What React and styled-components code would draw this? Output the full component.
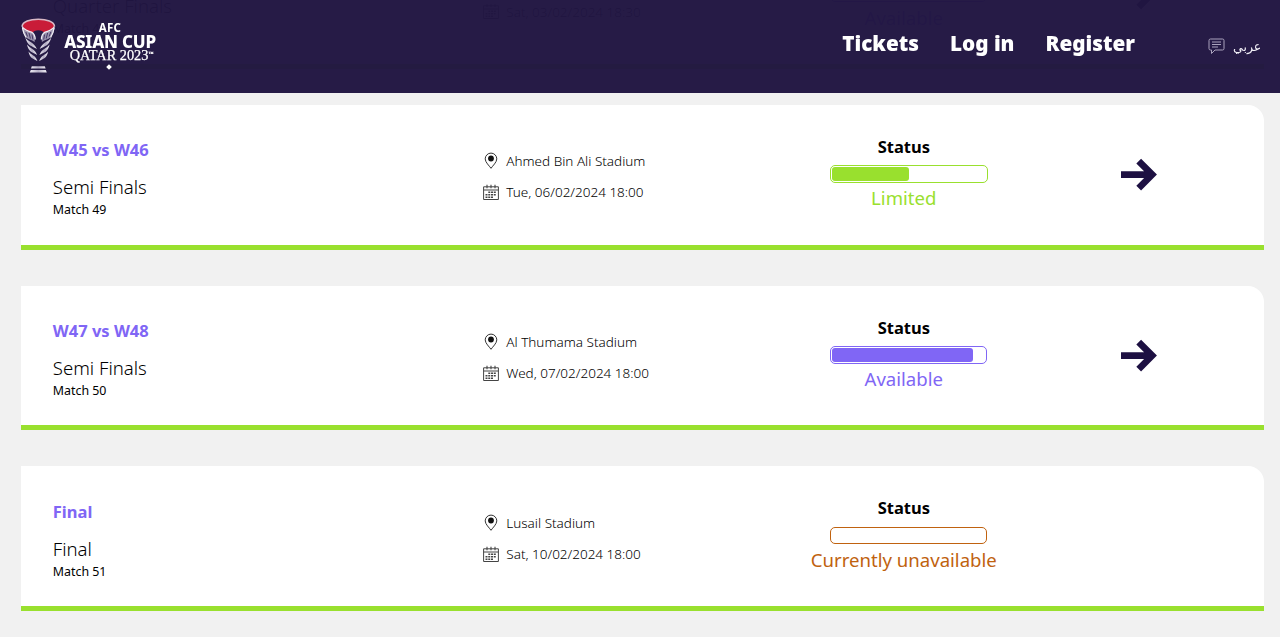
import React from "react";
import styled, { createGlobalStyle } from "styled-components";

const matches = [
  {
    id: 47,
    teams: "W39 vs W42",
    stage: "Quarter Finals",
    stadium: "Al Bayt Stadium",
    date: "Sat, 03/02/2024 18:30",
    status: "available",
  },
  {
    id: 49,
    teams: "W45 vs W46",
    stage: "Semi Finals",
    stadium: "Ahmed Bin Ali Stadium",
    date: "Tue, 06/02/2024 18:00",
    status: "limited",
  },
  {
    id: 50,
    teams: "W47 vs W48",
    stage: "Semi Finals",
    stadium: "Al Thumama Stadium",
    date: "Wed, 07/02/2024 18:00",
    status: "available",
  },
  {
    id: 51,
    teams: "Final",
    stage: "Final",
    stadium: "Lusail Stadium",
    date: "Sat, 10/02/2024 18:00",
    status: "unavailable",
  },
];

const statuses = {
  limited: { label: "Limited", color: "#99e02e", fill: 50 },
  available: { label: "Available", color: "#8066f5", fill: 92 },
  unavailable: { label: "Currently unavailable", color: "#c0620f", fill: 0 },
};

const Trophy = () => (
  <svg width="35" height="56" viewBox="0 0 35 56" fill="none">
    <defs>
      <linearGradient id="silver" x1="0" x2="1" y1="0" y2="0">
        <stop offset="0" stopColor="#f0eef5" />
        <stop offset="0.5" stopColor="#b4adc4" />
        <stop offset="1" stopColor="#f0eef5" />
      </linearGradient>
    </defs>
    <path
      d="M1.200 7.500C2 3.600 9 1 17.300 1s15.400 2.600 16.100 6.500c-1 4-5 6.500-9.500 8-1.500-2.300-4-3.300-6.600-3.300s-5.100 1-6.600 3.300C6 14 2.200 11.500 1.200 7.500Z"
      fill="#c91c38"
    />
    <path
      d="M1 8.500C1.500 3.600 9 1.200 17.300 1.200s15.800 2.400 16.300 7.300"
      stroke="#d8b9c6"
      strokeWidth="1.500"
    />
    <g fill="#9b93ae">
      <path d="M1 8.500c1.500 4 6 4.500 9.500 6 3 1.500 3.500 4.500 3.200 9.500-3-2.500-7-2.500-9.500-5.500C2.300 15.500 1.200 12.500 1 8.500Z" />
      <path d="M33.600 8.500c-1.500 4-6 4.500-9.500 6-3 1.500-3.500 4.500-3.200 9.500 3-2.500 7-2.500 9.500-5.500 1.900-3 3-6 3.200-10Z" />
    </g>
    <g stroke="#f0eef5" strokeWidth="1.300">
      <path d="M1.200 8.500c1.500 3.500 5.800 4.200 9.300 5.700 2.700 1.400 3.600 4 3.700 7.300" />
      <path d="M33.400 8.500c-1.500 3.500-5.800 4.200-9.300 5.700-2.700 1.400-3.600 4-3.700 7.300" />
      <path d="M1.500 10c.7 4 1.700 6.500 3.500 9.500" />
      <path d="M33.100 10c-.7 4-1.700 6.500-3.500 9.500" />
    </g>
    <path
      d="M4.800 14l1.700 4.500M8 15l1.400 5.500M11 16.500l.9 5M29.800 14l-1.700 4.500M26.600 15l-1.400 5.500M23.600 16.500l-.9 5"
      stroke="#3a2c5c"
      strokeWidth=".9"
    />
    <g fill="url(#silver)">
      <path d="M4.300 19.500c3 4.500 8.700 4.500 11.600 11.500-4.700-2.800-9.400-3-11.600-11.500Z" />
      <path d="M30.300 19.500c-3 4.500-8.700 4.500-11.600 11.500 4.700-2.800 9.400-3 11.600-11.500Z" />
      <path d="M6 26.500c3 4 8 4.200 10.100 10.500-4.400-2.600-8.500-2.800-10.100-10.500Z" />
      <path d="M28.600 26.500c-3 4-8 4.200-10.100 10.500 4.400-2.600 8.500-2.800 10.100-10.500Z" />
      <path d="M7.500 33.500c2.800 3.500 6.900 3.700 8.900 9.500-4-2.200-7.700-2.600-8.900-9.500Z" />
      <path d="M27.100 33.500c-2.800 3.500-6.900 3.700-8.900 9.500 4-2.200 7.700-2.600 8.900-9.500Z" />
      <path d="M10.800 48.300h13l.8 2.200H10ZM9.800 52h15l1 2.500H8.800Z" />
    </g>
  </svg>
);

const PinIcon = () => (
  <svg width="16" height="18" viewBox="0 0 16 18" fill="none">
    <path
      d="M8 16.300C6.300 13.800 2.200 10.200 2.200 6.900a5.800 5.800 0 0 1 11.600 0c0 3.300-4.100 6.900-5.800 9.400Z"
      stroke="#333"
      strokeWidth="1"
    />
    <circle cx="8" cy="6.500" r="2.900" fill="#111" />
  </svg>
);

const CalendarIcon = () => (
  <svg width="16" height="17" viewBox="0 0 16 17" fill="none" stroke="#444">
    <path d="M.6 2.800h14.800v12.700H.6ZM.6 6h14.800" strokeWidth="1" />
    <path d="M4 .8v3.400M8 .8v3.400M12 .8v3.400" strokeWidth="1.100" />
    <path
      d="M5.300 8.200h8.200M2.500 10.800h11M2.500 13.300h8"
      strokeWidth="1.600"
      strokeDasharray="2 .75"
    />
  </svg>
);

const ArrowIcon = () => (
  <svg width="37" height="34" viewBox="0 0 37 34" fill="none">
    <path
      d="M0 16.600H31M17.700 3.100L31.200 16.600L17.700 30.100"
      stroke="#1d1042"
      strokeWidth="6.700"
    />
  </svg>
);

const ChatIcon = () => (
  <svg width="17" height="17" viewBox="0 0 17 17" fill="none" stroke="#aaa3bd">
    <path d="M2.500 1h12A1.500 1.500 0 0 1 16 2.500v8a1.500 1.500 0 0 1-1.500 1.500H7l-3.500 3.500V12h-1A1.500 1.500 0 0 1 1 10.500v-8A1.500 1.500 0 0 1 2.500 1Z" />
    <path d="M4 4h9M4 6.500h9M4 9h6" />
  </svg>
);

const StatusMeter = ({ status }) => {
  const { label, color, fill } = statuses[status];
  return (
    <Status>
      <StatusTitle>Status</StatusTitle>
      <Bar $color={color} $wide={status === "limited"}>
        {fill > 0 && <BarFill $color={color} style={{ width: `${fill}%` }} />}
      </Bar>
      <StatusLabel $color={color}>{label}</StatusLabel>
    </Status>
  );
};

const MatchCard = ({ match }) => (
  <Card>
    <Info>
      <Teams>{match.teams}</Teams>
      <Stage>{match.stage}</Stage>
      <MatchNumber>Match {match.id}</MatchNumber>
    </Info>
    <Venue>
      <VenueRow>
        <PinIcon />
        {match.stadium}
      </VenueRow>
      <VenueRow>
        <CalendarIcon />
        {match.date}
      </VenueRow>
    </Venue>
    <StatusMeter status={match.status} />
    <Action>{match.status !== "unavailable" && <ArrowIcon />}</Action>
  </Card>
);

const App = () => {
  return (
    <Page>
      <GlobalStyle />
      <Header>
        <Logo>
          <Trophy />
          <LogoText>
            <LogoTop>AFC</LogoTop>
            <LogoName>ASIAN CUP</LogoName>
            <LogoHost>
              QATAR 2023<Trademark>™</Trademark>
            </LogoHost>
            <LogoDot />
          </LogoText>
        </Logo>
        <Nav>
          <NavLink>Tickets</NavLink>
          <NavLink>Log in</NavLink>
          <NavLink>Register</NavLink>
        </Nav>
        <Language>
          <ChatIcon />
          <span lang="ar">عربي</span>
        </Language>
      </Header>
      <MatchList>
        {matches.map((match) => (
          <MatchCard key={match.id} match={match} />
        ))}
      </MatchList>
    </Page>
  );
};

export default App;

const GlobalStyle = createGlobalStyle`
  * {
    box-sizing: border-box;
  }
  body {
    margin: 0;
    overflow: hidden;
    background: #f1f1f1;
    font-family: "Noto Sans", "Open Sans", sans-serif;
    color: #000;
  }
  svg {
    display: block;
    flex-shrink: 0;
  }
`;

const Page = styled.div`
  height: 637px;
  overflow: hidden;
`;

const Header = styled.header`
  position: fixed;
  top: 0;
  left: 0;
  z-index: 2;
  display: flex;
  width: 100%;
  height: 93.4px;
  padding: 0 20px 0 21px;
  background: rgba(33, 21, 66, 0.975);
  color: #fff;
`;

const Logo = styled.div`
  display: flex;
  gap: 8px;
  padding-top: 18px;
`;

const LogoText = styled.div`
  display: flex;
  flex-direction: column;
  align-items: center;
  width: 92px;
  padding-top: 4px;
  white-space: nowrap;
`;

const LogoTop = styled.div`
  font: 700 11.5px/12px "Noto Sans", sans-serif;
  letter-spacing: 0.2px;
`;

const LogoName = styled.div`
  font: 800 17px/15px "Noto Sans", sans-serif;
  letter-spacing: -0.2px;
`;

const LogoHost = styled.div`
  margin-left: 3px;
  font: 400 14.3px/13px "Liberation Serif", serif;
  -webkit-text-stroke: 0.25px #fff;
`;

const Trademark = styled.span`
  font-size: 5px;
  vertical-align: 5px;
  line-height: 1;
`;

const LogoDot = styled.div`
  width: 4px;
  height: 4px;
  margin: 3px 2px 0 0;
  background: #fff;
  transform: rotate(45deg);
`;

const Nav = styled.nav`
  display: flex;
  gap: 31px;
  margin-left: auto;
  padding-top: 29px;
`;

const NavLink = styled.a`
  font-size: 20.7px;
  font-weight: 900;
  line-height: 28px;
  white-space: nowrap;
`;

const Language = styled.div`
  display: flex;
  gap: 8px;
  width: 52px;
  margin-left: 73px;
  padding-top: 38px;
  font: 12.5px/18px "DejaVu Sans", sans-serif;
  color: #f3f1f8;
`;

const MatchList = styled.main`
  display: flex;
  flex-direction: column;
  gap: 36px;
  margin-top: -76px;
  padding: 0 16.5px 0 21.4px;
`;

const Card = styled.article`
  display: grid;
  grid-template-columns: 430px 308.5px 225px 1fr;
  flex-shrink: 0;
  height: 144.8px;
  padding-left: 31.4px;
  background: #fff;
  border-bottom: 5px solid #99e02e;
  border-radius: 0 16px 0 0;
`;

const Info = styled.div`
  padding-top: 33.4px;
`;

const Teams = styled.h3`
  margin: 0;
  font-size: 16.5px;
  line-height: 24px;
  font-weight: 700;
  color: #8066f5;
`;

const Stage = styled.div`
  margin-top: 12px;
  font-size: 18.6px;
  line-height: 26px;
  font-weight: 300;
`;

const MatchNumber = styled.div`
  font-size: 12.4px;
  line-height: 20px;
`;

const Venue = styled.div`
  display: flex;
  flex-direction: column;
  gap: 11px;
  padding-top: 46.7px;
`;

const VenueRow = styled.div`
  display: flex;
  align-items: center;
  gap: 7.5px;
  height: 20px;
  font-size: 13.5px;
  font-weight: 300;
  color: #000;
  white-space: nowrap;
`;

const Status = styled.div`
  display: flex;
  flex-direction: column;
  align-items: center;
  width: 225px;
  padding-top: 30px;
`;

const StatusTitle = styled.div`
  font-size: 16.5px;
  line-height: 24px;
  font-weight: 700;
`;

const Bar = styled.div`
  width: ${(props) => (props.$wide ? "158.5px" : "157px")};
  height: 17.5px;
  margin: 6.5px 0 0 10px;
  padding: 1px;
  border: 1px solid ${(props) => props.$color};
  border-radius: 5px;
`;

const BarFill = styled.div`
  height: 100%;
  border-radius: 3px;
  background: ${(props) => props.$color};
`;

const StatusLabel = styled.div`
  margin-top: 2.5px;
  font-size: 18.6px;
  line-height: 25px;
  color: ${(props) => props.$color};
  white-space: nowrap;
`;

const Action = styled.div`
  padding: 53px 0 0 104.5px;
`;
